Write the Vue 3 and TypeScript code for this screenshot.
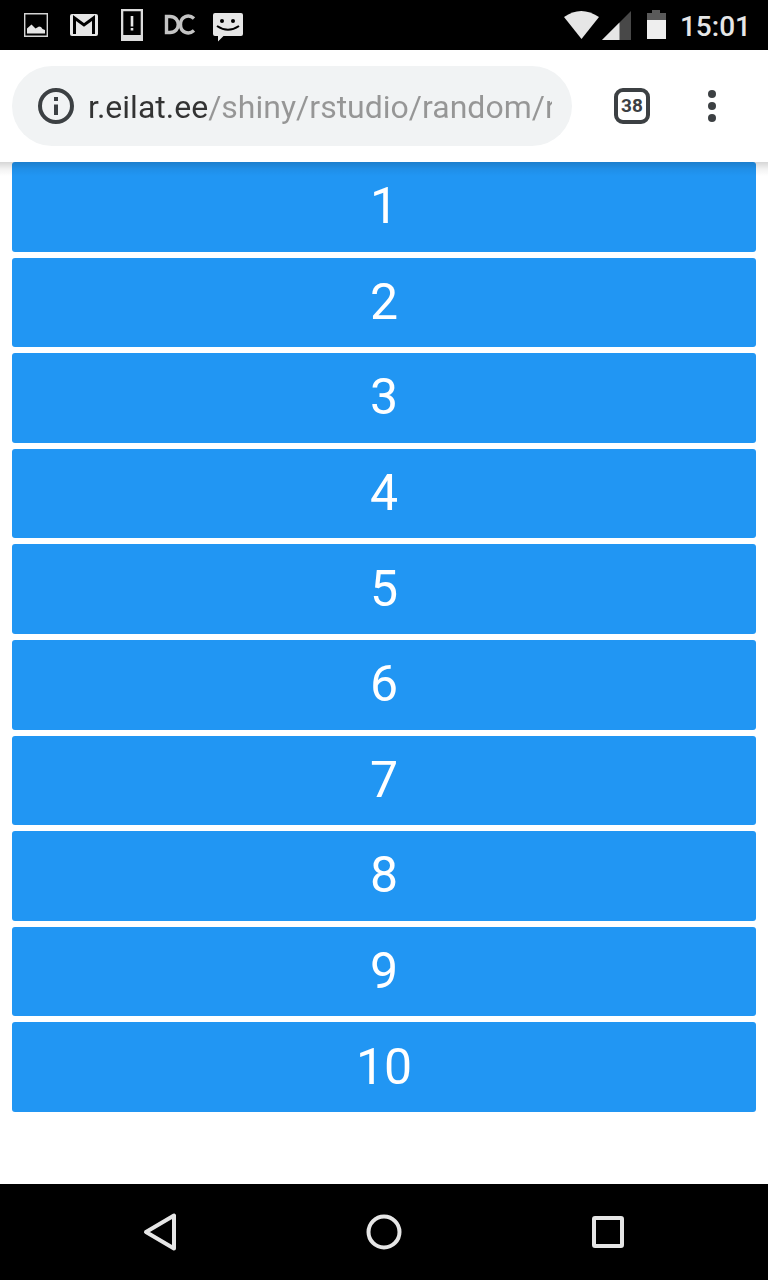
<script setup lang="ts">
import { ref } from 'vue'

const address = ref('r.eilat.ee/shiny/rstudio/random/r')
const tabCount = 38
const items: number[] = Array.from({ length: 10 }, (_, i) => i + 1)
</script>

<template>
  <div class="screen">
    <header class="status">
      <div class="notices">
        <svg class="notice" viewBox="0 0 32 32" aria-hidden="true">
          <path d="M4.700 4.700H27.300V27.300H4.700Z" fill="none" stroke="#d4d4d4" stroke-width="1.400" />
          <path d="M7 24.500V19.500L11.500 15.500 15.500 19.500 19 17.500 21 18 22.500 20 25 21V24.500Z" fill="#e6e6e6" />
        </svg>
        <svg class="notice" viewBox="0 0 32 32" aria-hidden="true">
          <rect x="2" y="5" width="28" height="22" rx="2" fill="#e6e6e6" />
          <path d="M6.500 25V9L16 16 25.500 9V25" fill="none" stroke="#000" stroke-width="3" />
        </svg>
        <svg class="notice" viewBox="0 0 32 32" aria-hidden="true">
          <path d="M5 0H27V32H5Z M7.300 2.300V26H24.700V2.300Z" fill="#dcdcdc" fill-rule="evenodd" />
          <path d="M14.700 7H17.300V17.500H14.700Z M14.700 19H17.300V21.500H14.700Z" fill="#e6e6e6" />
        </svg>
        <svg class="notice" viewBox="0 0 32 32" aria-hidden="true">
          <path d="M2.500 7.500V23.500H6C17 23.500 17 7.500 6 7.500Z" fill="none" stroke="#c4c4c4" stroke-width="3.400" />
          <path d="M30 9.500C25 5 16.500 7 16.500 15.500C16.500 24 25 26 30 21.500" fill="none" stroke="#c4c4c4" stroke-width="3.400" />
        </svg>
        <svg class="notice" viewBox="0 0 32 32" aria-hidden="true">
          <path d="M3 4H29Q31 4 31 6V25Q31 27 29 27H11.500L6 32.500V27H3Q1 27 1 25V6Q1 4 3 4Z" fill="#e6e6e6" />
          <circle cx="10" cy="12" r="2" fill="#000" />
          <circle cx="21" cy="12" r="2" fill="#000" />
          <path d="M5 17Q16 24.500 27 17" fill="none" stroke="#000" stroke-width="2" />
        </svg>
      </div>
      <div class="system">
        <svg class="radio" viewBox="0 0 68 32" aria-hidden="true">
          <path d="M0 8Q17-4 35 8L17.500 30Z" fill="#e6e6e6" />
          <path d="M67 2V31H38Z" fill="#484848" />
          <path d="M55.500 13.500V31H38Z" fill="#e6e6e6" />
        </svg>
        <svg class="battery" viewBox="0 0 20 32" aria-hidden="true">
          <path d="M1 4H6V1H14V4H20V11H1Z" fill="#5a5a5a" />
          <path d="M1 11H20V30H1Z" fill="#eee" />
        </svg>
        <time class="clock">15:01</time>
      </div>
    </header>

    <form class="toolbar" @submit.prevent>
      <div class="omnibox">
        <button class="info" type="button" aria-label="Site information">
          <svg viewBox="0 0 36 36">
            <circle cx="18" cy="18" r="16" fill="none" stroke="#3c4043" stroke-width="4" />
            <path d="M16 9H20V13H16Z M16 16.500H20V27H16Z" fill="#3c4043" />
          </svg>
        </button>
        <input v-model="address" class="address" type="text" aria-label="Address" spellcheck="false" />
      </div>
      <button class="tabs" type="button" aria-label="Open tabs">{{ tabCount }}</button>
      <button class="more" type="button" aria-label="More options">
        <svg viewBox="0 0 8 32">
          <circle cx="4" cy="4" r="4" />
          <circle cx="4" cy="16" r="4" />
          <circle cx="4" cy="28" r="4" />
        </svg>
      </button>
    </form>

    <main class="list">
      <button v-for="item in items" :key="item" class="item" type="button">{{ item }}</button>
    </main>

    <nav class="nav" aria-label="System navigation">
      <button type="button" aria-label="Back">
        <svg viewBox="0 0 48 48"><path d="M10 24L38 7.500V40.500Z" /></svg>
      </button>
      <button type="button" aria-label="Home">
        <svg viewBox="0 0 48 48"><circle cx="24" cy="24" r="15.500" /></svg>
      </button>
      <button type="button" aria-label="Overview">
        <svg viewBox="0 0 48 48"><rect x="10" y="10" width="28" height="28" rx="1" /></svg>
      </button>
    </nav>
  </div>
</template>

<style>
body {
  margin: 0;
}
</style>

<style scoped>
.screen {
  display: flex;
  flex-direction: column;
  min-height: 100vh;
  background: #fff;
  font-family: Roboto, "Liberation Sans", sans-serif;
}

button {
  padding: 0;
  border: 0;
  background: none;
  font-family: inherit;
}

svg {
  display: block;
  overflow: visible;
}

.status {
  display: flex;
  align-items: center;
  justify-content: space-between;
  height: 50px;
  padding: 0 17px 0 20px;
  background: #000;
}

.notices {
  display: flex;
  gap: 16px;
}

.notice {
  width: 32px;
  height: 32px;
}

.system {
  display: flex;
  align-items: center;
}

.radio {
  width: 68px;
  height: 32px;
  margin-right: 14px;
}

.battery {
  width: 20px;
  height: 32px;
  margin-right: 14px;
}

.clock {
  padding-top: 4px;
  color: #e6e6e6;
  font-size: 28px;
  font-weight: 500;
  line-height: 32px;
}

.toolbar {
  position: relative;
  display: flex;
  align-items: center;
  height: 112px;
  padding: 0 36px 0 12px;
  background: #fff;
}

.toolbar::after {
  content: "";
  position: absolute;
  top: 100%;
  left: 0;
  right: 0;
  height: 14px;
  background: linear-gradient(rgba(0, 0, 0, 0.16), rgba(0, 0, 0, 0.05) 50%, rgba(0, 0, 0, 0));
  pointer-events: none;
}

.omnibox {
  display: flex;
  flex: 1;
  align-items: center;
  min-width: 0;
  height: 80px;
  margin-right: 42px;
  padding: 0 20px 0 26px;
  box-sizing: border-box;
  border-radius: 40px;
  background: #f1f3f4;
}

.info {
  flex: none;
  width: 36px;
  height: 36px;
  margin-right: 14px;
}

.address {
  flex: 1;
  min-width: 0;
  height: 48px;
  padding: 2px 0 0;
  border: 0;
  outline: 0;
  background: linear-gradient(90deg, #333 120px, #969696 120px);
  background-clip: text;
  -webkit-background-clip: text;
  color: transparent;
  caret-color: #333;
  font-family: inherit;
  font-size: 32px;
}

.tabs {
  flex: none;
  width: 36px;
  height: 36px;
  margin-right: 42px;
  border: 4px solid #3c4043;
  border-radius: 9px;
  color: #3c4043;
  font-size: 19px;
  font-weight: 700;
  line-height: 28px;
}

.more {
  flex: none;
  width: 40px;
  height: 40px;
}

.more svg {
  width: 8px;
  height: 32px;
  margin: 0 auto;
  fill: #3c4043;
}

.list {
  display: grid;
  flex: 1;
  grid-auto-rows: minmax(60px, 1fr);
  gap: 6px;
  padding: 0 12px 72px;
}

.item {
  padding-bottom: 1px;
  border-radius: 3px;
  background: #2196f3;
  color: #fff;
  font-size: 50px;
  line-height: 60px;
}

.nav {
  display: flex;
  align-items: center;
  justify-content: center;
  gap: 176px;
  height: 96px;
  background: #000;
}

.nav button,
.nav svg {
  width: 48px;
  height: 48px;
}

.nav svg {
  fill: none;
  stroke: #e6e6e6;
  stroke-width: 4;
  stroke-linejoin: round;
}
</style>
